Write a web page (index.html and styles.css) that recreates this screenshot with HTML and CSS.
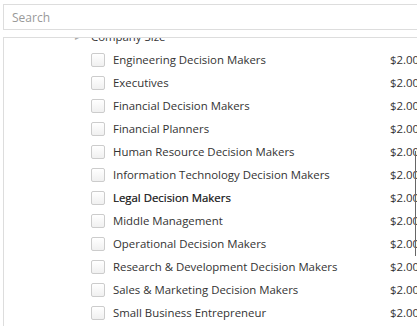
FILE: index.html
```html
<!DOCTYPE html>
<html lang="en">
<head>
  <meta charset="UTF-8" />
  <title>Audience Filters</title>
  <link rel="stylesheet" href="styles.css">
</head>
<body>
  <div class="search">
    <input class="search-input" type="text" placeholder="Search" />
  </div>

  <div class="panel">
    <div class="group-title">
      <span class="caret">&#9656;</span>
      <span>Company Size</span>
    </div>

    <label class="item"><span class="box"></span><span class="name">Engineering Decision Makers</span><span class="price">$2.00</span></label>
    <label class="item"><span class="box"></span><span class="name">Executives</span><span class="price">$2.00</span></label>
    <label class="item"><span class="box"></span><span class="name">Financial Decision Makers</span><span class="price">$2.00</span></label>
    <label class="item"><span class="box"></span><span class="name">Financial Planners</span><span class="price">$2.00</span></label>
    <label class="item"><span class="box"></span><span class="name">Human Resource Decision Makers</span><span class="price">$2.00</span></label>
    <label class="item"><span class="box"></span><span class="name">Information Technology Decision Makers</span><span class="price">$2.00</span></label>
    <label class="item hover"><span class="box"></span><span class="name">Legal Decision Makers</span><span class="price">$2.00</span></label>
    <label class="item"><span class="box"></span><span class="name">Middle Management</span><span class="price">$2.00</span></label>
    <label class="item"><span class="box"></span><span class="name">Operational Decision Makers</span><span class="price">$2.00</span></label>
    <label class="item"><span class="box"></span><span class="name">Research &amp; Development Decision Makers</span><span class="price">$2.00</span></label>
    <label class="item"><span class="box"></span><span class="name">Sales &amp; Marketing Decision Makers</span><span class="price">$2.00</span></label>
    <label class="item"><span class="box"></span><span class="name">Small Business Entrepreneur</span><span class="price">$2.00</span></label>

    <div class="scroll-thumb"></div>
  </div>
</body>
</html>
```

FILE: styles.css
```css
body {
  margin: 0;
  padding: 4px 0 0 3px;
  width: 440px;
  font-family: "Open Sans", sans-serif;
  font-size: 11.4px;
  color: #333;
  background: #fff;
  overflow: hidden;
}

.search {
  margin-bottom: 7px;
}

.search-input {
  display: block;
  box-sizing: border-box;
  width: 100%;
  height: 26px;
  padding: 0 8px;
  border: 1px solid #ddd;
  font-family: "Open Sans", sans-serif;
  font-size: 12px;
  color: #333;
  outline: none;
}

.search-input::placeholder {
  color: #999;
}

.panel {
  position: relative;
  border-top: 1px solid #ddd;
  border-left: 1px solid #ddd;
  height: 300px;
  overflow: hidden;
}

.group-title {
  display: flex;
  align-items: center;
  gap: 12px;
  margin-top: -13px;
  height: 23px;
  padding-left: 71px;
}

.caret {
  font-size: 8px;
  color: #aaa;
}

.item {
  display: flex;
  align-items: center;
  height: 23px;
  padding-left: 87px;
}

.box {
  flex: none;
  width: 12px;
  height: 12px;
  border: 1px solid #ccc;
  border-radius: 2px;
  background: linear-gradient(#fff, #f0f0f0);
  margin-right: 8px;
}

.name {
  width: 277px;
}

.item.hover .name {
  color: #111;
  -webkit-text-stroke: 0.2px #111;
}

.price {
  color: #333;
}

.scroll-thumb {
  position: absolute;
  left: 411px;
  top: 113px;
  width: 1px;
  height: 105px;
  background: #666;
}
```
